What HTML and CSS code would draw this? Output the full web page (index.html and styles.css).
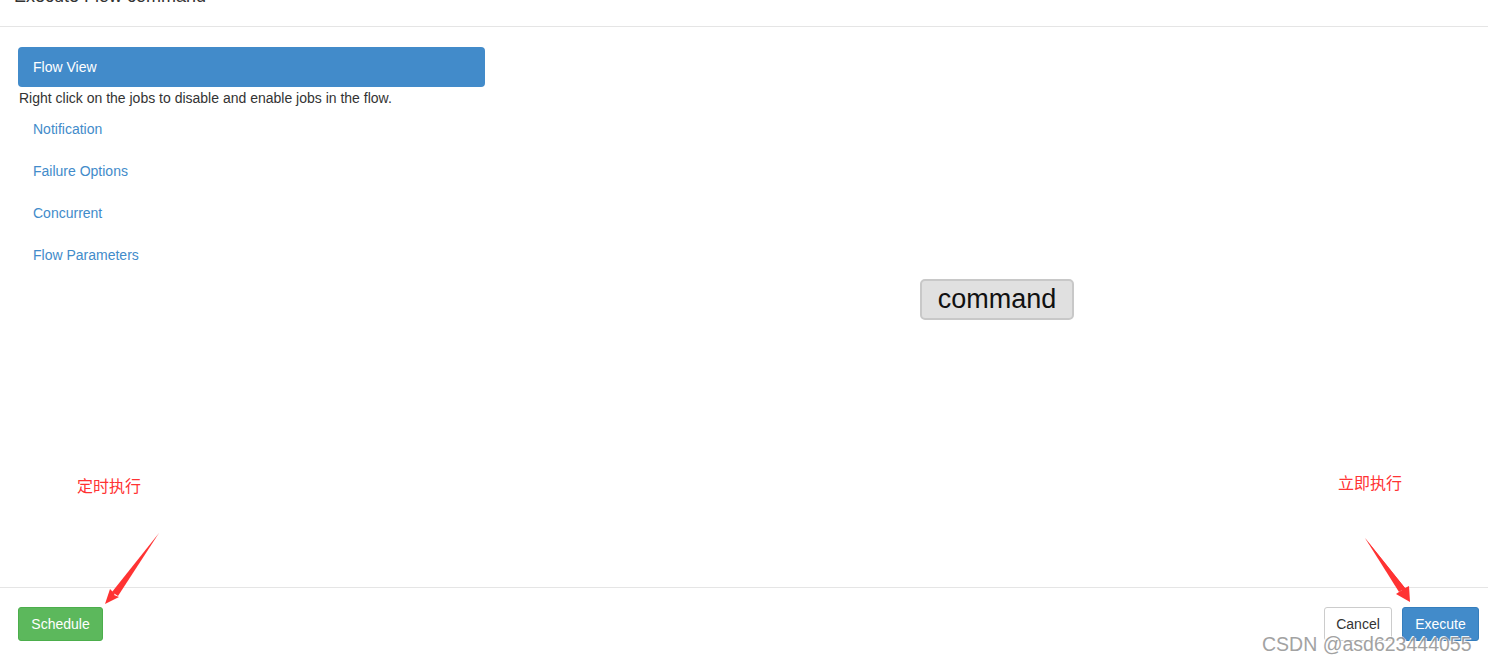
FILE: index.html
```html
<!DOCTYPE html>
<html>
<head>
<meta charset="utf-8">
<link rel="stylesheet" href="styles.css">
</head>
<body>
<div class="modal">
  <div class="modal-header">
    <h4 class="modal-title">Execute Flow command</h4>
  </div>
  <div class="modal-body">
    <div class="sidebar">
      <div class="nav-active">Flow View</div>
      <p class="hint">Right click on the jobs to disable and enable jobs in the flow.</p>
      <ul class="nav-links">
        <li><a>Notification</a></li>
        <li><a>Failure Options</a></li>
        <li><a>Concurrent</a></li>
        <li><a>Flow Parameters</a></li>
      </ul>
    </div>
    <div class="graph">
      <div class="node">command</div>
    </div>
  </div>
  <div class="modal-footer">
    <button class="btn btn-success">Schedule</button>
    <div class="right-btns">
      <button class="btn btn-default">Cancel</button>
      <button class="btn btn-primary">Execute</button>
    </div>
  </div>
</div>
<div class="note note-left">定时执行</div>
<div class="note note-right">立即执行</div>
<svg class="arrows" width="1488" height="661" viewBox="0 0 1488 661">
  <path d="M159 533 L115 594 L110 589 L105 604 L119 597 L114 595 Z" fill="#ff3333"/>
  <path d="M159 533 L112 592 L118 596 Z" fill="#ff3333"/>
  <path d="M1365 538 L1402 590 L1396 594 L1410 602 L1409 586 L1405 588 Z" fill="#ff3333"/>
  <path d="M1365 538 L1399 592 L1405 588 Z" fill="#ff3333"/>
</svg>
<div class="watermark">CSDN @asd623444055</div>
</body>
</html>
```
FILE: styles.css
```css
* { box-sizing: border-box; }
html, body { margin: 0; padding: 0; }
body {
  font-family: "Liberation Sans", Arial, sans-serif;
  color: #333;
  background: #fff;
  width: 1488px;
  height: 661px;
  overflow: hidden;
  position: relative;
}
.modal {
  display: flex;
  flex-direction: column;
  height: 661px;
}
.modal-header {
  height: 27px;
  border-bottom: 1px solid #e5e5e5;
  padding: 0 14px;
  overflow: hidden;
}
.modal-title {
  margin: -14px 0 0 0;
  font-size: 18px;
  font-weight: normal;
  line-height: 20px;
  color: #333;
}
.modal-body {
  flex: 1;
  display: flex;
  padding: 20px 18px 0 18px;
  position: relative;
}
.sidebar {
  width: 467px;
  flex: none;
}
.nav-active {
  height: 40px;
  background: #428bca;
  border-radius: 4px;
  color: #fff;
  font-size: 14px;
  line-height: 40px;
  padding-left: 15px;
}
.hint {
  margin: 2px 0 0 1px;
  font-size: 14px;
  line-height: 18px;
  color: #333;
}
.nav-links {
  list-style: none;
  margin: 1px 0 0 0;
  padding: 0;
}
.nav-links li {
  height: 42px;
  padding: 11px 15px;
  font-size: 14px;
  line-height: 20px;
}
.nav-links a {
  color: #428bca;
  text-decoration: none;
}
.graph {
  flex: 1;
  position: relative;
}
.node {
  position: absolute;
  left: 435px;
  top: 232px;
  width: 154px;
  height: 41px;
  background: #e0e0e0;
  border: 2px solid #c8c8c8;
  border-radius: 5px;
  font-size: 27px;
  line-height: 37px;
  text-align: center;
  color: #111;
}
.modal-footer {
  height: 74px;
  border-top: 1px solid #e5e5e5;
  padding: 19px 9px 0 18px;
  display: flex;
  justify-content: space-between;
  align-items: flex-start;
}
.right-btns {
  display: flex;
  gap: 10px;
}
.btn {
  font-family: "Liberation Sans", Arial, sans-serif;
  font-size: 14px;
  height: 34px;
  border-radius: 3px;
  border: 1px solid transparent;
  padding: 0;
  line-height: 32px;
  cursor: pointer;
}
.btn-success {
  background: #5cb85c;
  border-color: #4cae4c;
  color: #fff;
  width: 85px;
}
.btn-default {
  background: #fff;
  border-color: #ccc;
  color: #333;
  width: 68px;
}
.btn-primary {
  background: #428bca;
  border-color: #357ebd;
  color: #fff;
  width: 77px;
}
.note {
  position: absolute;
  color: #ff3333;
  font-size: 16px;
  line-height: 20px;
  font-family: "Noto Sans CJK SC", sans-serif;
}
.note-left { left: 77px; top: 475px; }
.note-right { left: 1338px; top: 472px; }
.arrows {
  position: absolute;
  left: 0;
  top: 0;
  pointer-events: none;
}
.watermark {
  position: absolute;
  left: 1262px;
  top: 632px;
  font-size: 19.5px;
  line-height: 24px;
  color: #999;
  text-shadow: 1px 1px 0 #fff, -1px -1px 0 #fff;
  opacity: 0.9;
}
```
